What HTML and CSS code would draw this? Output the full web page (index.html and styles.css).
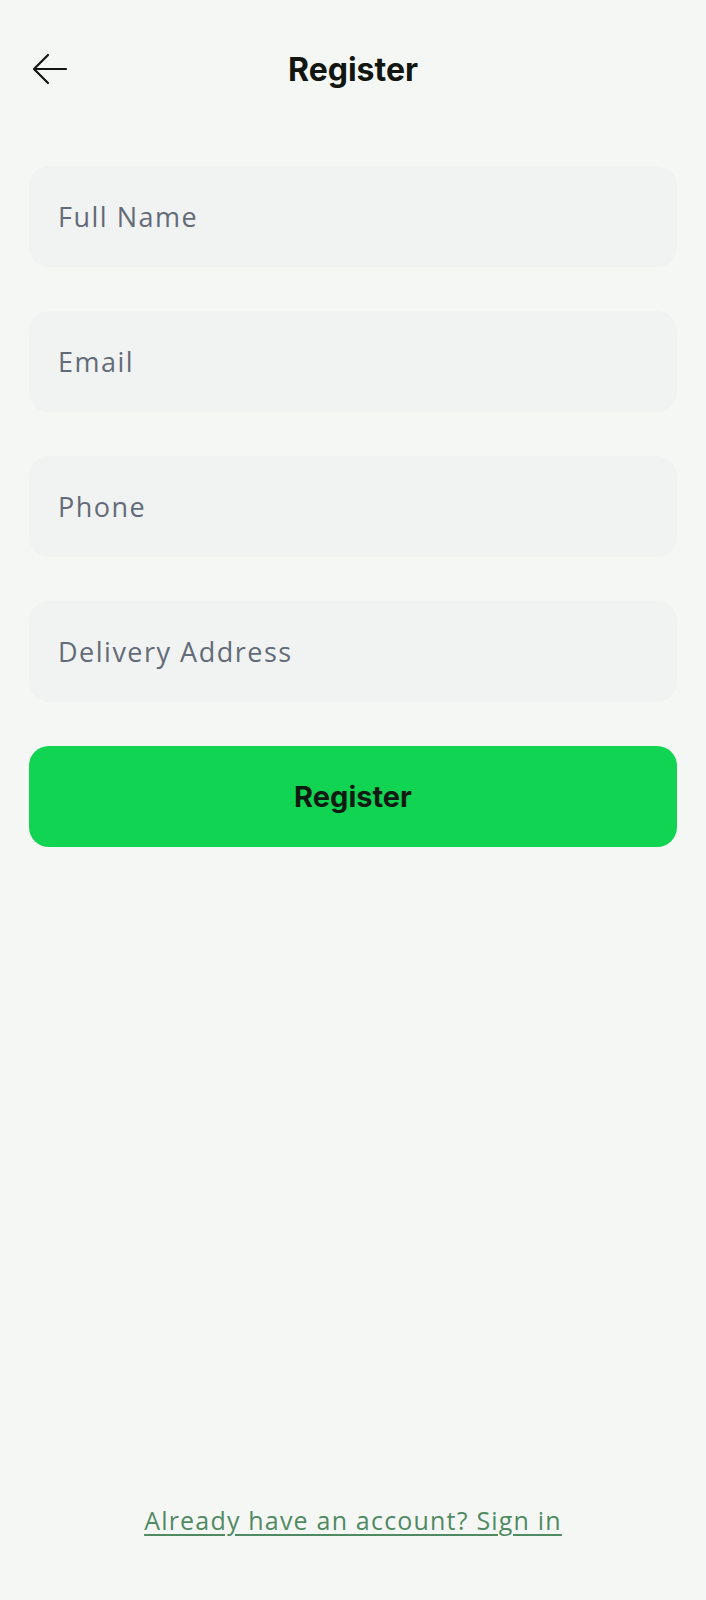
FILE: index.html
```html
<!DOCTYPE html>
<html lang="en">
<head>
<meta charset="utf-8">
<title>Register</title>
<link rel="stylesheet" href="styles.css">
</head>
<body>
<div class="page">
  <header class="header">
    <button class="back" aria-label="Back">
      <svg width="40" height="40" viewBox="0 0 40 40" fill="none" stroke="#111611" stroke-width="2.2" stroke-linecap="round" stroke-linejoin="round">
        <path d="M36 20H5"/>
        <path d="M18 6L4 20L18 34"/>
      </svg>
    </button>
    <h1 class="title">Register</h1>
    <span class="spacer"></span>
  </header>
  <main class="form">
    <div class="field">Full Name</div>
    <div class="field">Email</div>
    <div class="field">Phone</div>
    <div class="field">Delivery Address</div>
    <button class="submit">Register</button>
  </main>
  <footer class="footer">
    <a class="signin" href="#">Already have an account? Sign in</a>
  </footer>
</div>
</body>
</html>
```

FILE: styles.css
```css
* { box-sizing: border-box; }
html, body { margin: 0; padding: 0; }
body {
  background: #f5f7f5;
  font-family: "Open Sans", "Liberation Sans", sans-serif;
}
.page {
  min-height: 1600px;
  display: flex;
  flex-direction: column;
  padding: 0 29px;
}
.header {
  height: 138px;
  display: grid;
  grid-template-columns: 1fr auto 1fr;
  align-items: center;
}
.back {
  justify-self: start;
  width: 40px;
  height: 40px;
  padding: 0;
  margin: 0 0 0 1px;
  border: 0;
  background: none;
  display: flex;
}
.title {
  margin: 0;
  font-family: Inter, "Open Sans", sans-serif;
  font-weight: 700;
  font-size: 32px;
  color: #111611;
}
.form {
  flex: 1;
  display: flex;
  flex-direction: column;
  gap: 44px;
  padding-top: 28px;
}
.field {
  height: 101px;
  background: #f0f3f2;
  border-radius: 20px;
  display: flex;
  align-items: center;
  padding-left: 29px;
  font-size: 27px;
  letter-spacing: 1.5px;
  color: #646b78;
}
.submit {
  height: 101px;
  background: #10d452;
  border: 0;
  border-radius: 20px;
  font-family: Inter, "Open Sans", sans-serif;
  font-weight: 700;
  font-size: 29px;
  color: #0f1a12;
}
.footer {
  display: flex;
  justify-content: center;
  padding-bottom: 65px;
}
.signin {
  font-size: 25px;
  line-height: 30px;
  color: #4f8a63;
  text-decoration: underline;
  text-underline-offset: 4px;
  letter-spacing: 1.2px;
}
```
